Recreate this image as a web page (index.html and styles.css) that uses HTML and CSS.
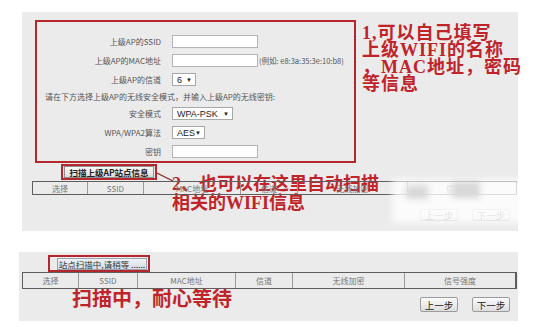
FILE: index.html
```html
<!DOCTYPE html>
<html lang="zh-CN">
<head>
    <meta charset="UTF-8">
    <title>上级AP设置</title>
    <link rel="stylesheet" href="styles.css">
</head>
<body>
    <div class="panel setup">
        <div class="redbox">
            <div class="form">
                <div class="label">上级AP的SSID</div>
                <div class="ctrl"><span class="input"></span></div>

                <div class="label">上级AP的MAC地址</div>
                <div class="ctrl"><span class="input"></span><span class="hint">(例如: e8:3a:35:3e:10:b8)</span></div>

                <div class="label">上级AP的信道</div>
                <div class="ctrl"><span class="select w-ch">6<i>▼</i></span></div>

                <div class="note">请在下方选择上级AP的无线安全模式，并输入上级AP的无线密钥:</div>

                <div class="label">安全模式</div>
                <div class="ctrl"><span class="select w-mode">WPA-PSK<i>▼</i></span></div>

                <div class="label">WPA/WPA2算法</div>
                <div class="ctrl"><span class="select w-alg">AES<i>▼</i></span></div>

                <div class="label">密钥</div>
                <div class="ctrl"><span class="input"></span></div>
            </div>
        </div>

        <div class="scan-box top-scan">
            <span class="btn scan">扫描上级AP站点信息</span>
        </div>

        <div class="table top-table">
            <span>选择</span><span>SSID</span><span>MAC地址</span><span>信道</span><span>无线加密</span><span>信号强度</span>
        </div>

        <div class="nav faded">
            <span class="btn step">上一步</span>
            <span class="btn step">下一步</span>
        </div>

        <!-- annotations -->
        <div class="mark mark-one">1,可以自己填写<br>上级WIFI的名称<br>，MAC地址，密码<br>等信息</div>
        <svg class="connector" width="18" height="10" viewBox="0 0 18 10">
            <line x1="0" y1="1" x2="16" y2="9" stroke="#8a2a2a" stroke-width="1.2"/>
        </svg>
        <div class="mark mark-two">2、也可以在这里自动扫描<br>相关的WIFI信息</div>
        <div class="smudge"><b class="s1"></b><b class="s2"></b></div>
    </div>

    <div class="panel scanning">
        <div class="scan-box wait-scan">
            <span class="btn wait">站点扫描中,请稍等 ......</span>
        </div>

        <div class="table low-table">
            <span>选择</span><span>SSID</span><span>MAC地址</span><span>信道</span><span>无线加密</span><span>信号强度</span>
        </div>

        <div class="bottom-row">
            <div class="mark mark-three">扫描中，耐心等待</div>
            <div class="nav">
                <span class="btn step">上一步</span>
                <span class="btn step">下一步</span>
            </div>
        </div>
    </div>
</body>
</html>
```

FILE: styles.css
```css
body {
    margin: 0;
    padding-top: 12px;
    background-color: #fff;
    font-family: "Noto Sans CJK SC", "Liberation Sans", sans-serif;
    color: #555;
}
.panel {
    background-color: #ebebeb;
    box-sizing: border-box;
    position: relative;
}
.setup {
    margin-left: 22px;
    width: 496px;
    height: 219px;
    padding-top: 8px;
}
.scanning {
    margin-top: 21px;
    margin-left: 19px;
    width: 499px;
    height: 69px;
    padding-top: 3px;
}
.redbox {
    margin-left: 13px;
    width: 321px;
    height: 143px;
    border: 2px solid #b3272d;
    box-sizing: border-box;
    padding-top: 13px;
}
.form {
    display: grid;
    grid-template-columns: 124px auto;
    grid-template-rows: 13px 13px 13px 9px 13px 13px 13px;
    column-gap: 11px;
    row-gap: 6px;
    font-size: 8px;
}
.label {
    text-align: right;
    line-height: 13px;
    white-space: nowrap;
}
.ctrl {
    display: flex;
    align-items: center;
}
.note {
    grid-column: 1 / -1;
    padding-left: 8px;
    line-height: 9px;
    white-space: nowrap;
}
.input {
    width: 86px;
    height: 13px;
    box-sizing: border-box;
    background-color: #fff;
    border: 1px solid #b4b4b4;
}
.hint {
    margin-left: 1px;
    white-space: nowrap;
    font-size: 7.5px;
}
.select {
    height: 13px;
    box-sizing: border-box;
    background-color: #fff;
    border: 1px solid #a8a8a8;
    font-family: "Liberation Sans", sans-serif;
    font-size: 9px;
    color: #222;
    display: flex;
    align-items: center;
    justify-content: space-between;
    padding: 0 3px 0 4px;
}
.select i {
    font-style: normal;
    font-size: 6px;
}
.w-ch { width: 24px; }
.w-mode { width: 61px; }
.w-alg { width: 33px; }

.scan-box {
    border: 2px solid #b3272d;
    box-sizing: border-box;
    display: flex;
    align-items: center;
    padding: 0 1px;
}
.top-scan {
    margin-left: 39px;
    margin-top: 1px;
    width: 96px;
    height: 16px;
}
.wait-scan {
    margin-left: 29px;
    width: 102px;
    height: 17px;
    padding-left: 7px;
}
.btn {
    display: flex;
    align-items: center;
    justify-content: center;
    box-sizing: border-box;
    border: 1px solid #8e8e8e;
    white-space: nowrap;
    color: #222;
}
.scan {
    width: 100%;
    height: 12px;
    font-size: 8.5px;
    font-weight: bold;
    background: linear-gradient(#fafafa, #dcdcdc);
}
.wait {
    width: 100%;
    height: 12px;
    font-size: 8.5px;
    background: linear-gradient(#eef2f6, #d6dde6);
    border-color: #9aa4b0;
    color: #333;
}
.table {
    display: grid;
    box-sizing: border-box;
    border: 1px solid #5e5e5e;
    font-size: 8px;
    color: #777;
    position: relative;
    z-index: 2;
}
.table span {
    border-right: 1px solid #9a9a9a;
    display: flex;
    align-items: center;
    justify-content: center;
}
.table span:last-child {
    border-right: none;
}
.top-table {
    margin-left: 10px;
    margin-top: 1px;
    width: 485px;
    height: 14px;
    grid-template-columns: 55px 56px 97px 57px 110px 1fr;
}
.low-table {
    margin-left: 3px;
    margin-top: 0;
    width: 495px;
    height: 17px;
    grid-template-columns: 56px 59px 98px 57px 112px 1fr;
    border-right-width: 2px;
}
.nav {
    display: flex;
    justify-content: flex-end;
    gap: 14px;
    padding-right: 8px;
}
.faded {
    margin-top: 14px;
    opacity: 0.5;
}
.step {
    width: 38px;
    height: 15px;
    font-size: 9.5px;
    border-radius: 2px;
    border-color: #9c9c9c;
    background: linear-gradient(#fbfbfb, #dedede);
}
.faded .step {
    height: 12px;
}
.bottom-row {
    display: flex;
    align-items: flex-start;
}
.bottom-row .nav {
    margin-left: auto;
    margin-top: 8px;
}

.mark {
    color: #c0242a;
    font-family: "Liberation Serif", "Noto Sans CJK SC", serif;
    font-weight: bold;
    white-space: nowrap;
}
.mark-one {
    position: absolute;
    left: 340px;
    top: 13px;
    font-size: 18px;
    line-height: 17px;
    letter-spacing: 1px;
}
.mark-two {
    position: absolute;
    left: 150px;
    top: 163px;
    font-size: 18px;
    line-height: 19px;
    z-index: 1;
}
.mark-three {
    margin-left: 53px;
    font-size: 20px;
    line-height: 20px;
}
.connector {
    position: absolute;
    left: 135px;
    top: 160px;
}
.smudge {
    position: absolute;
    left: 370px;
    top: 167px;
    width: 134px;
    height: 44px;
    background-color: rgba(255, 255, 255, 0.78);
    filter: blur(3px);
    z-index: 3;
}
.smudge b {
    position: absolute;
    background-color: #d8d8d8;
}
.s1 {
    left: 14px;
    top: 6px;
    width: 22px;
    height: 14px;
}
.s2 {
    left: 60px;
    top: 3px;
    width: 28px;
    height: 16px;
}
```
